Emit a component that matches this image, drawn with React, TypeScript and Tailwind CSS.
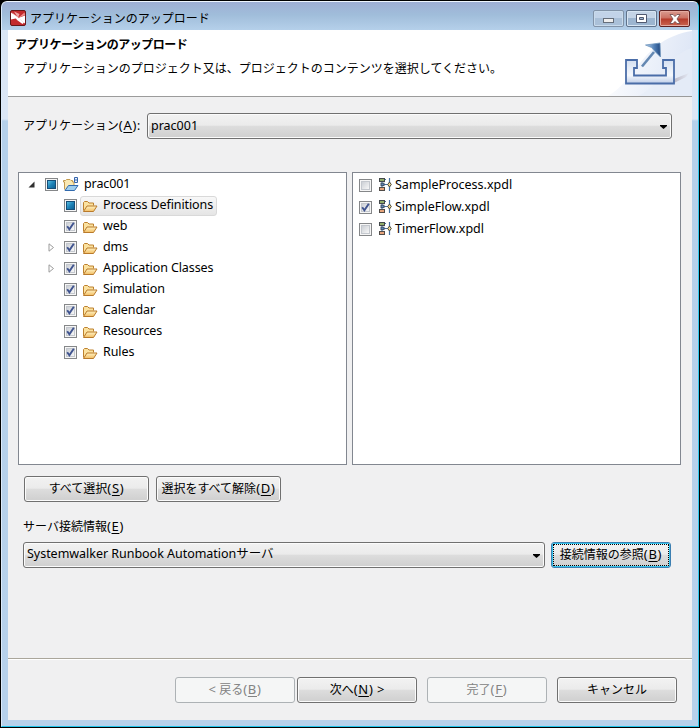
import React, { ReactNode } from "react";

type CheckState = "on" | "off" | "mixed";

function Check({ state }: { state: CheckState }) {
  return (
    <svg width="13" height="13" viewBox="0 0 13 13" className="shrink-0">
      <defs>
        <linearGradient id="boxFill" x1="0" y1="0" x2="1" y2="1">
          <stop offset="0" stopColor="#c9cdd3" />
          <stop offset="1" stopColor="#fafafa" />
        </linearGradient>
        <linearGradient id="mixedFill" x1="0" y1="0" x2="1" y2="1">
          <stop offset="0" stopColor="#5fc4e6" />
          <stop offset="0.5" stopColor="#1e83b8" />
          <stop offset="1" stopColor="#0b5c8f" />
        </linearGradient>
      </defs>
      <rect x="0.5" y="0.5" width="12" height="12" fill="#f6f6f6" stroke="#858789" />
      {state === "mixed" ? (
        <rect x="2.5" y="2.5" width="8" height="8" fill="url(#mixedFill)" stroke="#164e78" />
      ) : (
        <rect x="2.5" y="2.5" width="8" height="8" fill="url(#boxFill)" stroke="#c4c8ce" />
      )}
      {state === "on" && <path d="M3.2 6.2 L5.4 9.3 L9.8 2.8" fill="none" stroke="#40548f" strokeWidth="1.9" />}
    </svg>
  );
}

function Folder() {
  return (
    <svg width="16" height="14" viewBox="0 0 16 14" className="shrink-0">
      <defs>
        <linearGradient id="folderFront" x1="0" y1="0" x2="0" y2="1">
          <stop offset="0" stopColor="#fff3c4" />
          <stop offset="1" stopColor="#f2bd62" />
        </linearGradient>
      </defs>
      <path d="M1.5 11.5 V3.5 L2.5 2.5 H5.5 L7 4 H11.5 V6.5" fill="#fbe2a0" stroke="#bd812e" />
      <path d="M1.5 12.5 L5 7 H15 L11.5 12.5 Z" fill="url(#folderFront)" stroke="#b97a2b" />
    </svg>
  );
}

function ProjectFolder() {
  return (
    <svg width="16" height="16" viewBox="0 0 16 16" className="shrink-0">
      <path d="M1.5 13.5 V6 H0.5 V4.5 H2.5 L3.5 3.5 H7 L8 4.5 H9.5 V6 H11 V10" fill="#fae9b4" stroke="#c39a4f" />
      <path d="M2 14.5 L5.5 9.5 H15 L11.5 14.5 Z" fill="#9fceee" stroke="#326aad" />
      <path d="M11.5 1.5 h3 v5 h-3 z M11.5 4 h3" fill="#e8f2ff" stroke="#3564ab" />
    </svg>
  );
}

function Flow() {
  return (
    <svg width="13" height="13" viewBox="0 0 13 13" className="shrink-0">
      <path d="M3 3 V10 M5 1.5 H7 M5 6.5 H12 M10.5 0 V13" stroke="#4770a0" strokeWidth="1.2" fill="none" />
      <rect x="0.5" y="0.5" width="5" height="3" fill="#91ad6a" stroke="#43484b" />
      <rect x="2" y="5.2" width="3" height="2.4" fill="#5d8bb7" stroke="#405069" />
      <rect x="0.5" y="9.5" width="5" height="3" fill="#e6a47c" stroke="#514c48" />
      <path d="M10.5 4 L12.3 6.5 L10.5 9 L8.7 6.5 Z" fill="#f2d790" stroke="#4c4b3d" />
    </svg>
  );
}

function Arrow() {
  return (
    <svg width="7" height="4" viewBox="0 0 7 4" className="mr-px mt-0.5 shrink-0">
      <path d="M0 0 H7 V1 L3.5 4 L0 1 Z" fill="#000" />
    </svg>
  );
}

const face =
  "rounded-[3px] border border-[#707070] bg-[linear-gradient(180deg,#f2f2f2_0%,#ebebeb_47%,#dddddd_50%,#cfcfcf_100%)] shadow-[inset_0_0_0_1px_#fbfbfb]";

function Button({ width, disabled, children }: { width: string; disabled?: boolean; children: ReactNode }) {
  return (
    <button
      className={`flex h-[26px] items-center justify-center whitespace-pre pb-px ${width} ${
        disabled ? "rounded-[3px] border border-[#adb2b5] bg-[#f5f6f6] text-[#838383]" : face
      }`}
    >
      {children}
    </button>
  );
}

const Key = ({ k }: { k: string }) => (
  <span className="text-[13px] leading-none tracking-[0.7px]">
    (<span className="underline underline-offset-2">{k}</span>)
  </span>
);

interface Item {
  label: string;
  state: CheckState;
  expandable?: boolean;
  selected?: boolean;
}

const folders: Item[] = [
  { label: "Process Definitions", state: "mixed", selected: true },
  { label: "web", state: "on" },
  { label: "dms", state: "on", expandable: true },
  { label: "Application Classes", state: "on", expandable: true },
  { label: "Simulation", state: "on" },
  { label: "Calendar", state: "on" },
  { label: "Resources", state: "on" },
  { label: "Rules", state: "on" },
];

const files: Item[] = [
  { label: "SampleProcess.xpdl", state: "off" },
  { label: "SimpleFlow.xpdl", state: "on" },
  { label: "TimerFlow.xpdl", state: "off" },
];

function TitleBar() {
  return (
    <header className="flex h-7 items-start bg-[linear-gradient(180deg,#9eafd5_0%,#a0bdda_45%,#b5d0ea_100%)] pl-2">
      <svg width="16" height="16" viewBox="0 0 16 16" className="mt-2 shrink-0">
        <rect x="0.5" y="0.5" width="15" height="15" rx="1.5" fill="#c32a2d" stroke="#641819" />
        <path d="M1 2.5 L8 8 L1 9.5 Z" fill="#fff" />
        <path d="M4 1.5 L9.5 4 L8 8 Z" fill="#f0a5a3" />
        <path d="M15 5.5 L8 8 L15 13.5 Z" fill="#fff" />
        <path d="M2 2.5 L14 12.5 L12.5 14 L7 10 Z" fill="#fff" />
        <path d="M8 8 L14.5 2.5 L15 5 Z" fill="#ef8d8b" />
      </svg>
      <span className="ml-1 mt-[7px] leading-5">アプリケーションのアップロード</span>
      <div className="ml-auto mr-2 mt-2 flex gap-0.5">
        <div className="flex h-[17px] w-[31px] items-center justify-center rounded-[2px] border border-[#8293a8] bg-[linear-gradient(#c2d3e8_50%,#aac0d8_50%)] shadow-[inset_0_0_0_1px_#c9dbec]">
          <svg width="11" height="5" className="mt-1"><rect x=".5" y=".5" width="10" height="4" fill="#eee" stroke="#666e7a" /></svg>
        </div>
        <div className="flex h-[17px] w-[31px] items-center justify-center rounded-[2px] border border-[#60738c] bg-[linear-gradient(#c4d4e7_50%,#9cb5d0_50%)] shadow-[inset_0_0_0_1px_#d7e5f3]">
          <svg width="11" height="9"><path d="M.5 .5 H10.5 V8.5 H.5 Z M3.5 3.5 V5.5 H7.5 V3.5 Z" fill="#fff" stroke="#505970" fillRule="evenodd" /></svg>
        </div>
        <div className="flex h-[17px] w-[31px] items-center justify-center rounded-[2px] border border-[#5e2020] bg-[linear-gradient(#d99b90_0%,#cb6f61_48%,#b53a2a_52%,#ca6550_100%)] shadow-[inset_0_0_0_1px_#e5aaa0]">
          <svg width="12" height="10" viewBox="0 0 12 10"><path d="M1 .5 H4 L6 2.6 L8 .5 H11 L8 5 L11 9.5 H8 L6 7.4 L4 9.5 H1 L4 5 Z" fill="#fff" stroke="#6b4a4c" strokeWidth=".8" /></svg>
        </div>
      </div>
    </header>
  );
}

function Banner() {
  return (
    <section className="flex h-[67px] justify-between border-b border-[#9b9b9b] bg-white">
      <div className="whitespace-nowrap pl-[7px] pt-1.5">
        <h1 className="text-[12px] font-bold leading-[18px] tracking-[-0.5px]">アプリケーションのアップロード</h1>
        <p className="ml-2 mt-[5px] leading-5">アプリケーションのプロジェクト又は、プロジェクトのコンテンツを選択してください。</p>
      </div>
      <svg width="84" height="66" viewBox="0 0 84 66" className="shrink-0">
        <defs>
          <linearGradient id="sweep" x1="0" y1="0" x2="1" y2="0.2">
            <stop offset="0" stopColor="#fff" />
            <stop offset="1" stopColor="#dfe7f6" />
          </linearGradient>
          <linearGradient id="tray" x1="0" y1="0" x2="0" y2="1">
            <stop offset="0" stopColor="#d5e0f1" />
            <stop offset="0.65" stopColor="#f5f8fd" />
            <stop offset="1" stopColor="#becde8" />
          </linearGradient>
          <linearGradient id="head" x1="0" y1="0" x2="1" y2="0">
            <stop offset="0" stopColor="#b8d2ed" />
            <stop offset="0.6" stopColor="#4f7db4" />
            <stop offset="1" stopColor="#234980" />
          </linearGradient>
          <linearGradient id="trayShadow">
            <stop offset="0" stopColor="#bcb9c6" />
            <stop offset="1" stopColor="#e4e9f4" />
          </linearGradient>
        </defs>
        <path d="M0 66 C30 49 34 9 84 1 V66 Z" fill="url(#sweep)" />
        <path d="M30 66 C56 55 53 28 84 18 V66 Z" fill="#e7edf8" opacity=".65" />
        <path d="M66 49 L81 43 L78 47 L66 53 Z" fill="url(#trayShadow)" />
        <path d="M18 30 H29 V38 H26 V45.5 H58 V38 H55 V30 H66 V53.5 H18 Z" fill="url(#tray)" stroke="#4a6da8" strokeWidth="1.8" />
        <path d="M34 36.5 L46 22" stroke="#6488b2" strokeWidth="2.6" />
        <path d="M37.5 15 L52 13 L52.5 27 L47 21.5 L43.5 17.5 Z" fill="url(#head)" stroke="#7095bd" strokeWidth=".8" />
      </svg>
    </section>
  );
}

export default function App() {
  return (
    <div className="h-[728px] w-[700px] bg-black pl-px pt-px">
      <div className="flex h-[726px] w-[698px] flex-col overflow-hidden rounded-t-[6px] border-b border-l border-r border-t border-b-[#20c4ea] border-l-[#dceafa] border-r-[#32c9ed] border-t-[#eef6ff] bg-[linear-gradient(180deg,#d8e5f5_0px,#dbe6f5_117px,#b5d0ea_119px,#b7d1eb_100%)] font-['Noto_Sans','Noto_Sans_CJK_JP',sans-serif] text-[12px] text-black">
        <TitleBar />
        <main className="ml-1.5 flex h-[690px] w-[684px] flex-col bg-[#f0f0f1]">
          <Banner />
          <div className="ml-[15px] mt-4 flex h-[26px] items-center">
            <span className="w-[124px] whitespace-nowrap pb-px">アプリケーション<Key k="A" />:</span>
            <div className={`flex h-[26px] w-[525px] items-center justify-between px-[3px] ${face}`}>
              <span className="text-[12.5px]">prac001</span>
              <Arrow />
            </div>
          </div>
          <div className="ml-2.5 mt-[33px] flex h-[293px] gap-[5px] text-[12.5px]">
            <div className="w-[329px] border border-[#828790] bg-white tracking-[-0.1px]">
              <div className="flex h-[22px] items-center pl-[9px]">
                <svg width="7" height="7" className="mr-[10px]"><path d="M6.5 0.5 V6.5 H0.5 Z" fill="#303030" /></svg>
                <Check state="mixed" />
                <span className="ml-[5px] flex items-center gap-[5px]"><ProjectFolder />prac001</span>
              </div>
              {folders.map((f) => (
                <div key={f.label} className="flex h-[21px] items-center pl-[29px]">
                  <span className="w-4 shrink-0">
                    {f.expandable && (
                      <svg width="7" height="9"><path d="M1 .8 L5.5 4.5 L1 8.2 Z" fill="#fff" stroke="#9b9b9b" /></svg>
                    )}
                  </span>
                  <Check state={f.state} />
                  <span
                    className={`ml-[3px] flex h-5 items-center gap-[5px] whitespace-nowrap rounded-[3px] border px-px pr-[3px] ${
                      f.selected ? "border-[#d9d9d9] bg-[linear-gradient(#f8f8f8,#e5e5e5)]" : "border-transparent"
                    }`}
                  >
                    <Folder />
                    <span className="pb-px">{f.label}</span>
                  </span>
                </div>
              ))}
            </div>
            <div className="w-[329px] border border-[#828790] bg-white pt-px">
              {files.map((f) => (
                <div key={f.label} className="flex h-[22px] items-center pl-1.5">
                  <Check state={f.state} />
                  <span className="ml-[7px] flex items-center gap-[3px] pb-px">
                    <Flow />
                    <span className="pt-px">{f.label}</span>
                  </span>
                </div>
              ))}
            </div>
          </div>
          <div className="ml-4 mt-[11px] flex gap-[7px]">
            <Button width="w-[125px]">すべて選択<Key k="S" /></Button>
            <Button width="w-[125px]">選択をすべて解除<Key k="D" /></Button>
          </div>
          <div className="ml-[15px] mt-[15px] leading-5">サーバ接続情報<Key k="E" /></div>
          <div className="ml-[15px] mt-[5px] flex gap-1.5">
            <div className={`flex h-[26px] w-[522px] items-center justify-between px-[3px] ${face}`}>
              <span className="pb-px text-[12.5px] tracking-[-0.03px]">Systemwalker Runbook Automationサーバ</span>
              <Arrow />
            </div>
            <button className="h-[26px] w-[120px] rounded-[3px] border border-[#3c7fb1] bg-[linear-gradient(180deg,#f2f2f2_0%,#ebebeb_47%,#dddddd_50%,#cfcfcf_100%)] p-px shadow-[inset_0_0_0_1px_#38c5ed]">
              <span className="flex h-[22px] items-center justify-center whitespace-nowrap border border-dotted border-black pb-px">
                接続情報の参照<Key k="B" />
              </span>
            </button>
          </div>
          <footer className="mt-auto flex h-[62px] border-t border-[#aaa69b] pl-[167px] pt-[18px] shadow-[inset_0_1px_0_#fff]">
            <Button width="w-[120px]" disabled><span className="text-[13px]">&lt; </span>戻る<Key k="B" /></Button>
            <div className="w-0.5" />
            <Button width="w-[120px]">次へ<Key k="N" /><span className="text-[13px]"> &gt;</span></Button>
            <div className="w-2.5" />
            <Button width="w-[120px]" disabled>完了<Key k="F" /></Button>
            <div className="w-2.5" />
            <Button width="w-[120px]">キャンセル</Button>
          </footer>
        </main>
      </div>
    </div>
  );
}
